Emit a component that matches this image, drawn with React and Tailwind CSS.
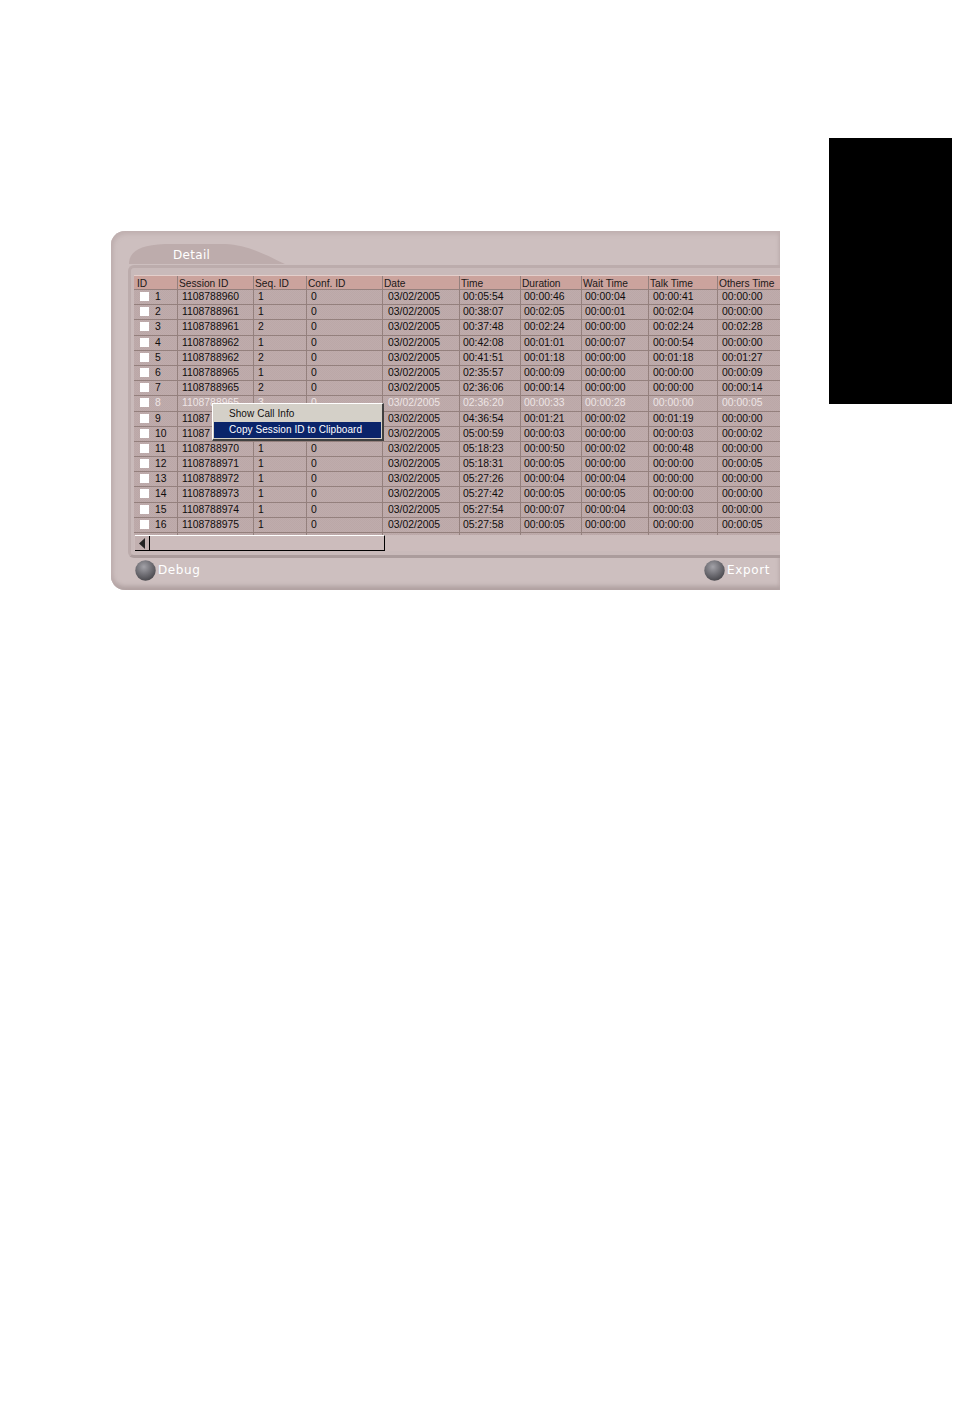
const COLS = "grid grid-cols-[44px_76px_53px_76px_77px_61px_61px_67px_69px_62px]";
const HEAD = ["ID", "Session ID", "Seq. ID", "Conf. ID", "Date", "Time", "Duration", "Wait Time", "Talk Time", "Others Time"];
const ROWS = [
  [1, "1108788960", 1, "00:05:54", "00:00:46", "00:00:04", "00:00:41", "00:00:00", "0"],
  [2, "1108788961", 1, "00:38:07", "00:02:05", "00:00:01", "00:02:04", "00:00:00", "0"],
  [3, "1108788961", 2, "00:37:48", "00:02:24", "00:00:00", "00:02:24", "00:02:28", "0"],
  [4, "1108788962", 1, "00:42:08", "00:01:01", "00:00:07", "00:00:54", "00:00:00", "0"],
  [5, "1108788962", 2, "00:41:51", "00:01:18", "00:00:00", "00:01:18", "00:01:27", "0"],
  [6, "1108788965", 1, "02:35:57", "00:00:09", "00:00:00", "00:00:00", "00:00:09", "0"],
  [7, "1108788965", 2, "02:36:06", "00:00:14", "00:00:00", "00:00:00", "00:00:14", "0"],
  [8, "1108788965", 3, "02:36:20", "00:00:33", "00:00:28", "00:00:00", "00:00:05", "0"],
  [9, "11087", "", "04:36:54", "00:01:21", "00:00:02", "00:01:19", "00:00:00", ""],
  [10, "11087", "", "05:00:59", "00:00:03", "00:00:00", "00:00:03", "00:00:02", ""],
  [11, "1108788970", 1, "05:18:23", "00:00:50", "00:00:02", "00:00:48", "00:00:00", "0"],
  [12, "1108788971", 1, "05:18:31", "00:00:05", "00:00:00", "00:00:00", "00:00:05", "0"],
  [13, "1108788972", 1, "05:27:26", "00:00:04", "00:00:04", "00:00:00", "00:00:00", "0"],
  [14, "1108788973", 1, "05:27:42", "00:00:05", "00:00:05", "00:00:00", "00:00:00", "0"],
  [15, "1108788974", 1, "05:27:54", "00:00:07", "00:00:04", "00:00:03", "00:00:00", "0"],
  [16, "1108788975", 1, "05:27:58", "00:00:05", "00:00:00", "00:00:00", "00:00:05", "0"],
];

function Orb({ id }) {
  return (
    <svg width="21" height="21" viewBox="0 0 21 21" className="shrink-0">
      <defs>
        <radialGradient id={id} cx="0.42" cy="0.32" r="0.72">
          <stop offset="0" stopColor="#a3a2a8" />
          <stop offset="0.55" stopColor="#6f6e74" />
          <stop offset="1" stopColor="#46454a" />
        </radialGradient>
      </defs>
      <circle cx="10.5" cy="10.5" r="10.2" fill={"url(#" + id + ")"} />
    </svg>
  );
}

function Cell({ children, className = "" }) {
  return (
    <div className={"h-full border-r border-[#94807d] whitespace-nowrap overflow-hidden leading-[14px] " + className}>
      {children}
    </div>
  );
}

function Row({ r, selected }) {
  const color = selected ? "text-[#eee5e5]" : "text-[#100c0c]";
  return (
    <div className={COLS + " h-[15.2px] border-b border-[#94807d] " + color}>
      <Cell className="flex items-start pl-[6px]">
        <span className="mt-[2px] w-[9px] h-[9px] bg-white shrink-0" />
        <span className="ml-[6px]">{r[0]}</span>
      </Cell>
      <Cell className="pl-[4px]">{r[1]}</Cell>
      <Cell className="pl-[4px]">{r[2]}</Cell>
      <Cell className="pl-[4px]">{r[8]}</Cell>
      <Cell className="pl-[5px]">03/02/2005</Cell>
      <Cell className="pl-[3px]">{r[3]}</Cell>
      <Cell className="pl-[3px]">{r[4]}</Cell>
      <Cell className="pl-[3px]">{r[5]}</Cell>
      <Cell className="pl-[4px]">{r[6]}</Cell>
      <Cell className="pl-[4px] border-r-0">{r[7]}</Cell>
    </div>
  );
}

export default function App() {
  return (
    <div className="w-[954px] h-[1411px] bg-white flex items-start pt-[138px] pl-[111px] overflow-hidden font-['Liberation_Sans',sans-serif]">
      <section className="mt-[93px] w-[669px] h-[359px] shrink-0 flex flex-col pl-[17px] rounded-l-[14px] bg-[#cdbfbf] shadow-[inset_2px_3px_4px_#bfafaf,inset_0_-4px_4px_#b0a1a1] overflow-hidden">
        <div className="h-[34px] shrink-0 pt-[13px] pl-[1px]">
          <div className="relative w-[156px] h-[20px]">
            <svg width="156" height="20" viewBox="0 0 156 20" className="block">
              <path d="M0 20 C0 8 10 1 36 0 L96 0 C122 1 140 13 156 20 Z" fill="#bdacac" />
            </svg>
            <span className="absolute left-[44px] top-[3px] text-[12px] tracking-[0.3px] leading-[16px] text-white font-['DejaVu_Sans',sans-serif]">Detail</span>
          </div>
        </div>

        <div className="shrink-0 w-[652px] pt-[7px] pl-[3px] pb-[4px] border-t-[3px] border-l-[3px] border-b-[3px] border-[#bcacac] border-b-[#ab9c9c] rounded-l-[6px] bg-[#c9baba]">
          <div className="w-[646px] text-[10.4px] relative">
            <div className={COLS + " h-[15px] bg-[#cba39d] border-t border-[#e4cfcb] border-b border-b-[#94807d] text-[#201818] text-[10.2px]"}>
              {HEAD.map((h, i) => (
                <Cell key={h} className={"pt-[1px] " + (i === 0 ? "pl-[3px]" : "pl-[1px]") + (i === 9 ? " border-r-0" : "")}>{h}</Cell>
              ))}
            </div>
            <div className="bg-[repeating-conic-gradient(#bfacac_0_25%,#bba7a7_0_50%)] bg-[length:2px_2px]">
              {ROWS.map((r) => <Row key={r[0]} r={r} selected={r[0] === 8} />)}
              <div className={COLS + " h-[2px]"}>
                {HEAD.map((h, i) => <Cell key={h} className={i === 9 ? "border-r-0" : ""} />)}
              </div>
            </div>

            <div className="absolute left-[78px] top-[128px] w-[172px] h-[38px] bg-[#d4d0c8] border-t border-l border-white border-r-2 border-b-2 border-r-[#404040] border-b-[#404040] px-[1px] pt-[2px] text-[10px] tracking-[0.07px] whitespace-nowrap">
              <div className="h-[16px] pl-[15px] leading-[16px] text-[#111]">Show Call Info</div>
              <div className="h-[16px] pl-[15px] leading-[16px] bg-[#0a246a] text-white">Copy Session ID to Clipboard</div>
            </div>
          </div>

          <div className="h-[16px] flex items-stretch bg-[#ccbcbc]">
            <div className="ml-[1px] w-[250px] flex border-t border-white border-b border-r border-b-black border-r-black">
              <div className="w-[15px] flex items-center justify-center border-r border-black bg-[#c2b0b0]">
                <svg width="8" height="11" viewBox="0 0 8 11"><path d="M7 0 L1 5.5 L7 11 Z" fill="#222" /></svg>
              </div>
            </div>
          </div>
        </div>

        <div className="flex-1 flex items-start justify-between pl-[7px] pr-[10px] pt-[2px] text-[12px] leading-[21px] text-white font-['DejaVu_Sans',sans-serif] tracking-[0.6px]">
          <div className="flex items-center gap-[2px]"><Orb id="orb-a" /><span>Debug</span></div>
          <div className="flex items-center gap-[2px]"><Orb id="orb-b" /><span>Export</span></div>
        </div>
      </section>
      <aside className="ml-[49px] w-[123px] h-[266px] shrink-0 bg-black" />
    </div>
  );
}
